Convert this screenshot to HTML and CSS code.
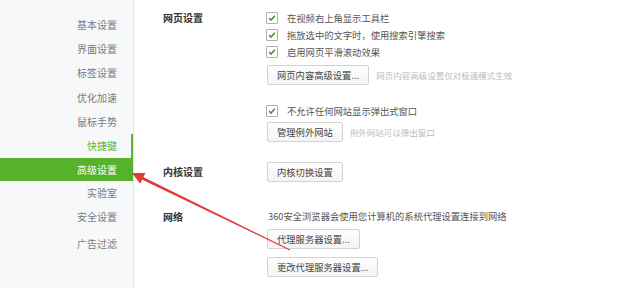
FILE: index.html
```html
<!DOCTYPE html>
<html lang="zh-CN">
<head>
    <meta charset="UTF-8">
    <title>高级设置</title>
    <link rel="stylesheet" href="styles.css">
</head>
<body>
    <div class="page">
        <div class="sidebar">
            <div class="nav-item">基本设置</div>
            <div class="nav-item">界面设置</div>
            <div class="nav-item">标签设置</div>
            <div class="nav-item">优化加速</div>
            <div class="nav-item">鼠标手势</div>
            <div class="nav-item hover">快捷键</div>
            <div class="nav-item active">高级设置</div>
            <div class="nav-item">实验室</div>
            <div class="nav-item">安全设置</div>
            <div class="nav-item last">广告过滤</div>
        </div>

        <div class="main">
            <div class="section">
                <div class="label">网页设置</div>
                <div class="body">
                    <div class="check-row"><span class="check"><svg viewBox="0 0 11 11"><path d="M2.3 5.6 L4.5 7.8 L8.6 2.9"/></svg></span>在视频右上角显示工具栏</div>
                    <div class="check-row"><span class="check"><svg viewBox="0 0 11 11"><path d="M2.3 5.6 L4.5 7.8 L8.6 2.9"/></svg></span>拖放选中的文字时，使用搜索引擎搜索</div>
                    <div class="check-row"><span class="check"><svg viewBox="0 0 11 11"><path d="M2.3 5.6 L4.5 7.8 L8.6 2.9"/></svg></span>启用网页平滑滚动效果</div>
                    <div class="btn-row first-btn"><button class="btn">网页内容高级设置...</button><span class="hint">网页内容高级设置仅对极速模式生效</span></div>
                    <div class="check-row gap-top"><span class="check"><svg viewBox="0 0 11 11"><path d="M2.3 5.6 L4.5 7.8 L8.6 2.9"/></svg></span>不允许任何网站显示弹出式窗口</div>
                    <div class="btn-row tight"><button class="btn">管理例外网站</button><span class="hint">例外网站可以弹出窗口</span></div>
                </div>
            </div>

            <div class="section kernel">
                <div class="label">内核设置</div>
                <div class="body">
                    <div class="btn-row"><button class="btn">内核切换设置</button></div>
                </div>
            </div>

            <div class="section network">
                <div class="label">网络</div>
                <div class="body">
                    <div class="text-row">360安全浏览器会使用您计算机的系统代理设置连接到网络</div>
                    <div class="btn-row proxy"><button class="btn">代理服务器设置...</button></div>
                    <div class="btn-row change"><button class="btn">更改代理服务器设置...</button></div>
                </div>
            </div>
        </div>

        <svg class="arrow" viewBox="0 0 620 288" width="620" height="288">
            <polygon points="142.7,176.7 290.2,249.6 289.8,250.4 141.3,179.3"/>
            <polygon points="132,173 145.4,172.9 140.2,183.7"/>
        </svg>
    </div>
</body>
</html>
```

FILE: styles.css
```css
body {
    margin: 0;
    font-family: "Noto Sans CJK SC", "Noto Sans", sans-serif;
    background-color: #fff;
}

.page {
    position: relative;
    display: flex;
    width: 620px;
    height: 288px;
    overflow: hidden;
}

.sidebar {
    width: 133px;
    flex-shrink: 0;
    padding-top: 13px;
    background-color: #f7f8fa;
    border-right: 1px solid #e3e5e8;
    box-sizing: content-box;
}

.nav-item {
    height: 24.2px;
    line-height: 24px;
    padding-right: 16px;
    text-align: right;
    font-size: 10px;
    color: #7a7a7a;
}

.nav-item.hover {
    color: #5cb531;
    box-shadow: inset -2px 0 0 #5cb531;
}

.nav-item.active {
    height: 23px;
    line-height: 23px;
    background-color: #56b22b;
    color: #fff;
}

.nav-item.last {
    margin-top: 2px;
}

.main {
    flex: 1;
    padding: 9px 0 0 29px;
}

.section {
    display: flex;
}

.label {
    width: 105px;
    flex-shrink: 0;
    font-size: 10px;
    font-weight: 600;
    color: #333;
    line-height: 17px;
}

.body {
    flex: 1;
}

.check-row {
    display: flex;
    align-items: center;
    height: 17px;
    font-size: 9.3px;
    color: #555;
}

.check {
    width: 10px;
    height: 10px;
    margin: 0 9px 0 -2px;
    border: 1px solid #b0b0b0;
    border-radius: 1px;
    background-color: #fff;
    display: flex;
}

.check svg {
    width: 10px;
    height: 10px;
    fill: none;
    stroke: #3c9a2b;
    stroke-width: 1.7;
}

.gap-top {
    margin-top: 17px;
}

.btn-row {
    display: flex;
    align-items: center;
}

.first-btn {
    margin-top: 5px;
}

.tight {
    margin-top: 3px;
}

.btn {
    height: 20px;
    padding: 0 9px;
    margin: 0 0 0 -1px;
    border: 1px solid #d2d2d2;
    border-radius: 2px;
    background: linear-gradient(#fefefe, #f4f4f4);
    font-family: inherit;
    font-size: 9.3px;
    color: #444;
    line-height: 18px;
}

.hint {
    margin-left: 7px;
    font-size: 8.5px;
    color: #bbb;
}

.kernel {
    margin-top: 20px;
}

.kernel .label {
    line-height: 20px;
}

.network {
    margin-top: 26px;
}

.text-row {
    height: 17px;
    line-height: 17px;
    font-size: 9.3px;
    color: #555;
}

.proxy {
    margin-top: 4px;
}

.change {
    margin-top: 8px;
}

.arrow {
    position: absolute;
    left: 0;
    top: 0;
    pointer-events: none;
    fill: #e23a3a;
}
```
